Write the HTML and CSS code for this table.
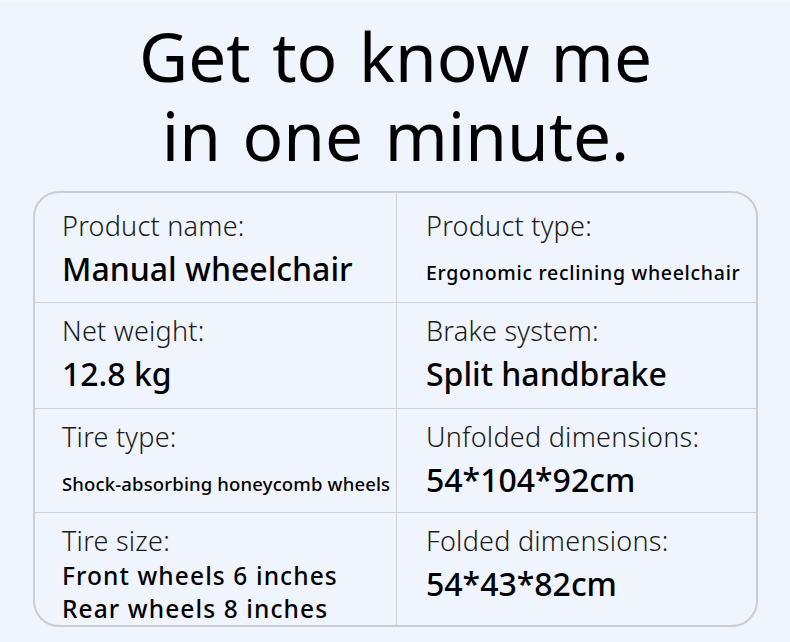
FILE: index.html
```html
<!DOCTYPE html>
<html lang="en">
<head>
<meta charset="utf-8">
<title>Get to know me in one minute.</title>
<link rel="stylesheet" href="styles.css">
</head>
<body>
<main class="page">
  <h1 class="title"><span class="line">Get to know me</span><span class="line">in one minute.</span></h1>
  <section class="specs">
    <div class="cell r1 left"><div class="label">Product name:</div><div class="value big">Manual wheelchair</div></div>
    <div class="cell r1"><div class="label">Product type:</div><div class="value small wide">Ergonomic reclining wheelchair</div></div>
    <div class="cell r2 left"><div class="label">Net weight:</div><div class="value big">12.8 kg</div></div>
    <div class="cell r2"><div class="label">Brake system:</div><div class="value big">Split handbrake</div></div>
    <div class="cell r3 left"><div class="label">Tire type:</div><div class="value small">Shock-absorbing honeycomb wheels</div></div>
    <div class="cell r3"><div class="label">Unfolded dimensions:</div><div class="value big">54*104*92cm</div></div>
    <div class="cell r4 left last"><div class="label">Tire size:</div><div class="value mid">Front wheels 6 inches<br>Rear wheels 8 inches</div></div>
    <div class="cell r4 last"><div class="label">Folded dimensions:</div><div class="value big">54*43*82cm</div></div>
  </section>
</main>
</body>
</html>
```

FILE: styles.css
```css
html, body {
  margin: 0;
  padding: 0;
}
body {
  background: #f0f4fc;
  font-family: "Noto Sans", "Open Sans", sans-serif;
  color: #111;
  width: 790px;
  height: 642px;
  overflow: hidden;
  border-top: 3px solid #f4f7fd;
  box-sizing: border-box;
}
.page {
  padding: 0 32px 0 33px;
}
.title {
  margin: 0;
  padding-top: 14px;
  height: 177px;
  box-sizing: border-box;
  text-align: center;
  font-size: 67.5px;
  font-weight: 400;
  line-height: 79px;
  word-spacing: 4px;
  color: #000;
}
.title .line {
  display: block;
}
.specs {
  display: grid;
  grid-template-columns: 362px 1fr;
  grid-template-rows: 110px 106px 104px 112px;
  border: 2px solid #c9cdd6;
  border-radius: 26px;
  margin-top: 11px;
  width: 725px;
  box-sizing: border-box;
  overflow: hidden;
}
.cell {
  border-bottom: 1px solid #cdd1da;
  padding-left: 29px;
  padding-top: 10px;
  box-sizing: border-box;
  white-space: nowrap;
}
.cell.r1 {
  padding-top: 15px;
}
.cell.left {
  border-right: 1px solid #cdd1da;
  padding-left: 27px;
}
.cell.last {
  border-bottom: none;
}
.label {
  font-size: 27px;
  font-weight: 300;
  line-height: 36px;
  letter-spacing: 0.25px;
  color: #1a1a1a;
}
.value {
  color: #000;
  font-weight: 500;
}
.value.big {
  font-size: 32px;
  line-height: 50px;
}
.value.small {
  font-size: 18.5px;
  line-height: 50px;
  padding-top: 4px;
  letter-spacing: 0.15px;
}
.value.small.wide {
  font-size: 19.5px;
  letter-spacing: 0.7px;
}
.value.mid {
  font-size: 24.5px;
  line-height: 33px;
  letter-spacing: 1.1px;
}
```
